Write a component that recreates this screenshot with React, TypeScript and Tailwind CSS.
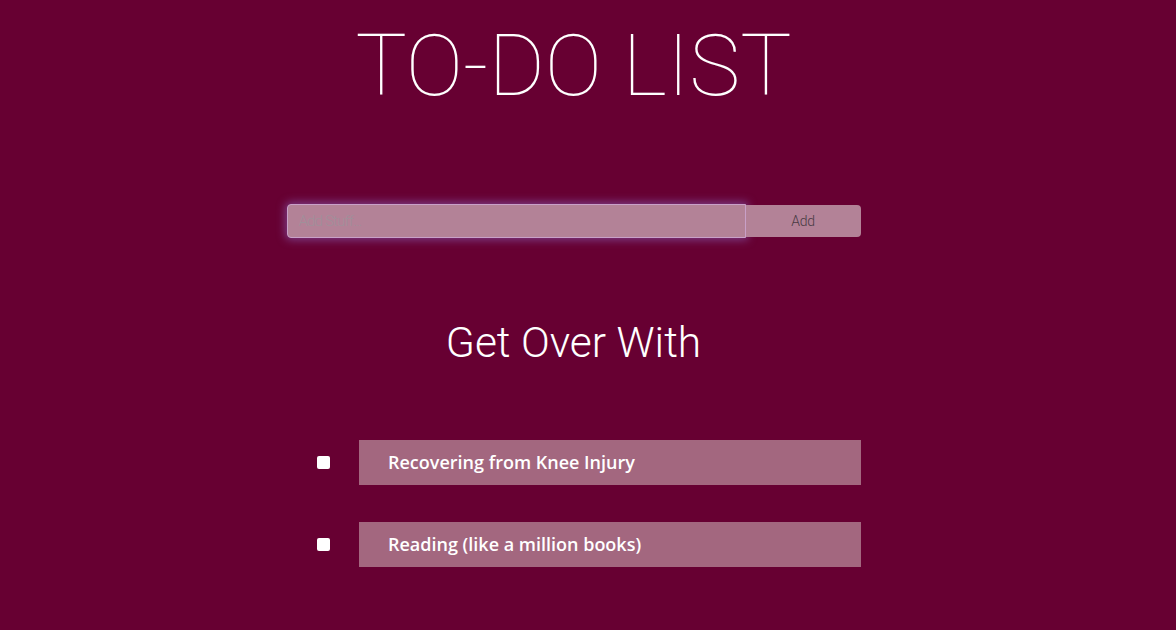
import React from "react";

export default function App() {
  const items = ["Recovering from Knee Injury", "Reading (like a million books)"];
  return (
    <div className="min-h-[630px] w-full bg-[#670032] flex flex-col items-center pr-[29px]" style={{ fontFamily: "Roboto, sans-serif" }}>
      <h1 className="mt-[16px] text-[86px] leading-[100px] font-thin text-white">TO-DO LIST</h1>
      <div className="mt-[88px] flex items-start">
        <input
          autoFocus
          placeholder="Add Stuff..."
          className="w-[459px] h-[34px] rounded-l-[4px] bg-[#b38297] pl-[11px] text-[15px] tracking-[-0.8px] font-light text-[#555] placeholder:text-[#a0909a] caret-[#333] outline-none border border-[#c9a0c8] shadow-[0_0_8px_2px_rgba(140,110,200,0.55)]"
          style={{ fontFamily: "Roboto, sans-serif" }}
        />
        <button className="mt-[1px] w-[115px] h-[32px] rounded-r-[4px] bg-[#b38297] text-[14px] tracking-[-0.3px] text-[#4a3a44] font-light">Add</button>
      </div>
      <h2 className="mt-[78px] text-[42.5px] leading-[54px] font-light text-white">Get Over With</h2>
      <div className="mt-[70px] ml-[29px] flex flex-col gap-[37px]">
        {items.map((t) => (
          <div key={t} className="flex items-center">
            <div className="w-[13px] h-[13px] rounded-[2px] bg-white mr-[29px] ml-[2px]" />
            <div
              className="w-[502px] h-[45px] bg-[#a3677f] flex items-center pl-[29px] text-[18px] font-semibold text-white"
              style={{ fontFamily: "'Open Sans', sans-serif" }}
            >
              {t}
            </div>
          </div>
        ))}
      </div>
    </div>
  );
}
